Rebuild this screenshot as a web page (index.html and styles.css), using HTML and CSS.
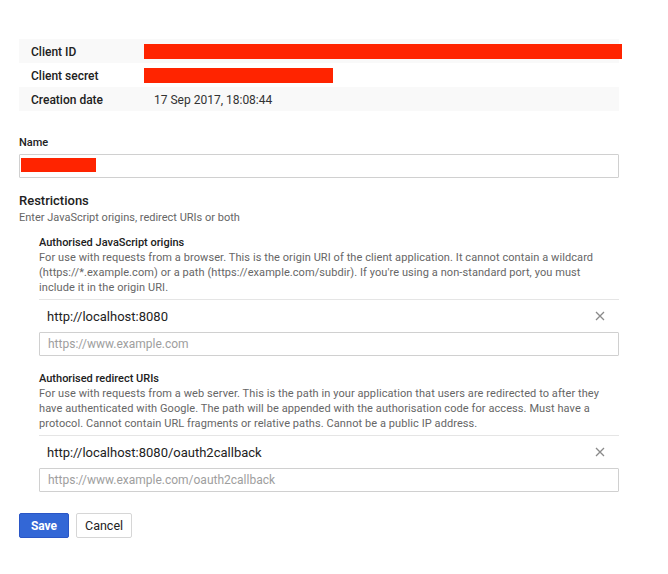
FILE: index.html
```html
<!DOCTYPE html>
<html lang="en">
<head>
  <meta charset="UTF-8">
  <title>Client ID for Web application</title>
  <link rel="stylesheet" href="styles.css">
</head>
<body>
  <div class="page">
    <div class="info">
      <div class="info-row">
        <span class="key">Client ID</span>
        <span class="redact redact-id"></span>
      </div>
      <div class="info-row">
        <span class="key">Client secret</span>
        <span class="redact redact-secret"></span>
      </div>
      <div class="info-row">
        <span class="key">Creation date</span>
        <span class="val">17 Sep 2017, 18:08:44</span>
      </div>
    </div>

    <div class="field">
      <label class="label">Name</label>
      <div class="input name-input"><span class="redact redact-name"></span></div>
    </div>

    <h3 class="section-title">Restrictions</h3>
    <p class="hint">Enter JavaScript origins, redirect URIs or both</p>

    <div class="group">
      <h4 class="group-title">Authorised JavaScript origins</h4>
      <div class="desc-wrap">
        <p class="hint desc">For use with requests from a browser. This is the origin URI of the client application. It cannot contain a wildcard (https://*.example.com) or a path (https://example.com/subdir). If you're using a non-standard port, you must include it in the origin URI.</p>
      </div>
      <div class="entry">
        <span>http://localhost:8080</span>
        <button class="remove" title="Remove">
          <svg width="10" height="10" viewBox="0 0 10 10"><path d="M1 1L9 9M9 1L1 9" stroke="#8a8a8a" stroke-width="1.3"/></svg>
        </button>
      </div>
      <input class="input" placeholder="https://www.example.com">
    </div>

    <div class="group">
      <h4 class="group-title">Authorised redirect URIs</h4>
      <div class="desc-wrap">
        <p class="hint desc">For use with requests from a web server. This is the path in your application that users are redirected to after they have authenticated with Google. The path will be appended with the authorisation code for access. Must have a protocol. Cannot contain URL fragments or relative paths. Cannot be a public IP address.</p>
      </div>
      <div class="entry">
        <span>http://localhost:8080/oauth2callback</span>
        <button class="remove" title="Remove">
          <svg width="10" height="10" viewBox="0 0 10 10"><path d="M1 1L9 9M9 1L1 9" stroke="#8a8a8a" stroke-width="1.3"/></svg>
        </button>
      </div>
      <input class="input" placeholder="https://www.example.com/oauth2callback">
    </div>

    <div class="actions">
      <button class="btn btn-primary">Save</button>
      <button class="btn">Cancel</button>
    </div>
  </div>
</body>
</html>
```

FILE: styles.css
```css
* {
  box-sizing: border-box;
}

body {
  margin: 0;
  background: #fff;
  font-family: Roboto, "Liberation Sans", sans-serif;
  font-size: 11px;
  color: #222;
}

.page {
  width: 600px;
  margin-left: 19px;
  padding-top: 39px;
}

.info-row {
  display: grid;
  grid-template-columns: 125px 1fr;
  align-items: center;
  height: 24px;
  padding-top: 1px;
}

.info-row:nth-child(odd) {
  background: #f9f9f9;
}

.key {
  padding-left: 12px;
  font-weight: 500;
  font-size: 12px;
  color: #212121;
}

.val {
  padding-left: 10px;
  font-size: 12px;
  color: #333;
}

.redact {
  display: block;
  background: #ff2400;
  height: 15px;
}

.redact-id {
  width: 478px;
}

.redact-secret {
  width: 189px;
}

.redact-name {
  width: 75px;
  height: 14px;
}

.field {
  margin-top: 25px;
}

.label {
  display: block;
  font-weight: 500;
  font-size: 11px;
  margin-bottom: 5px;
}

.input {
  display: block;
  width: 100%;
  height: 24px;
  border: 1px solid #d0d0d0;
  border-radius: 1px;
  font-family: inherit;
  font-size: 12px;
  padding: 0 8px;
  color: #222;
  outline: none;
}

.input::placeholder {
  color: #9e9e9e;
}

.name-input {
  padding: 3px 1px;
}

.section-title {
  margin: 15px 0 0;
  font-size: 13px;
  font-weight: 500;
  color: #212121;
}

.hint {
  margin: 2px 0 0;
  color: #666;
  font-size: 11px;
  line-height: 15px;
}

.group {
  margin-left: 20px;
  margin-top: 11px;
}

.group + .group {
  margin-top: 16px;
}

.group-title {
  margin: 0;
  font-size: 11px;
  font-weight: 500;
  color: #212121;
}

.desc-wrap {
  padding-bottom: 4px;
  border-bottom: 1px solid #e5e5e5;
}

.desc {
  margin-top: 1px;
  max-width: 562px;
  letter-spacing: 0.08px;
}

.entry {
  display: flex;
  align-items: center;
  justify-content: space-between;
  height: 32px;
  padding-left: 8px;
  font-size: 13px;
  color: #222;
}

.remove {
  background: none;
  border: none;
  padding: 0;
  margin-right: 14px;
  cursor: pointer;
  display: flex;
}

.actions {
  display: flex;
  gap: 7px;
  margin-top: 21px;
}

.btn {
  height: 25px;
  padding: 0 8px;
  border: 1px solid #d6d6d6;
  border-radius: 2px;
  background: #fff;
  font-family: inherit;
  font-size: 12.5px;
  color: #222;
  cursor: pointer;
}

.btn-primary {
  width: 50px;
  background: #3367d6;
  border-color: #2a56c6;
  color: #fff;
  font-weight: 700;
  font-size: 12px;
}
```
